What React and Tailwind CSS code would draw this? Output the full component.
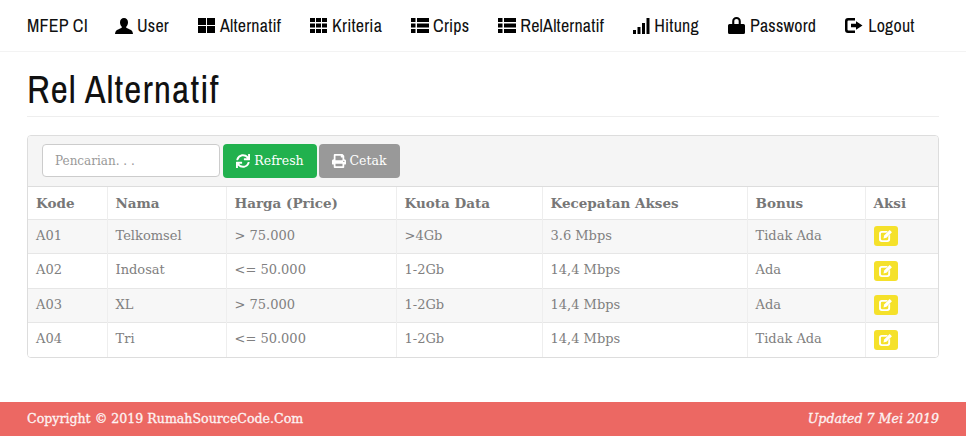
import React from "react";
import { FaSync, FaPrint } from "react-icons/fa";

const NARROW = "font-['Liberation_Sans_Narrow','Archivo_Narrow','Liberation_Sans',sans-serif]";

const User = () => (
  <svg viewBox="0 0 18 16" className="h-[16px] w-[18px] fill-black">
    <path d="M9 0c2.400 0 4 1.800 4 4.300 0 1.800-.7 3.200-1.600 4.200-.4.500-.3 1.100.3 1.500 1.600.8 3.600 1.400 4.900 2.600.7.7 1.200 1.900 1.400 3.400H0c.2-1.500.7-2.700 1.400-3.400C2.700 11.400 4.700 10.800 6.300 10c.6-.4.7-1 .3-1.500C5.700 7.500 5 6.100 5 4.300 5 1.800 6.600 0 9 0z" />
  </svg>
);

const Lock = () => (
  <svg viewBox="0 0 17 17" className="h-[17px] w-[17px] fill-black">
    <path d="M8.500 0C11 0 12.800 1.700 12.800 4.200V7H15.500a1.500 1.500 0 0 1 1.500 1.500V15.500a1.500 1.500 0 0 1-1.500 1.500H1.500A1.500 1.500 0 0 1 0 15.500V8.500A1.500 1.500 0 0 1 1.500 7H4.200V4.200C4.200 1.700 6 0 8.500 0zM6.300 7h4.400V4.200c0-1.300-.9-2.200-2.200-2.200s-2.200.9-2.200 2.200z" />
  </svg>
);

const ThLarge = () => (
  <svg viewBox="0 0 17 15" className="h-[15px] w-[17px] fill-black">
    <rect x="0" y="0" width="8" height="7" />
    <rect x="9" y="0" width="8" height="7" />
    <rect x="0" y="8" width="8" height="7" />
    <rect x="9" y="8" width="8" height="7" />
  </svg>
);

const Th = () => (
  <svg viewBox="0 0 17 15" className="h-[15px] w-[17px] fill-black">
    {[0, 6, 12].map((x) =>
      [0, 5.5, 11].map((y) => <rect key={`${x}-${y}`} x={x} y={y} width="5" height="4" />)
    )}
  </svg>
);

const ThList = () => (
  <svg viewBox="0 0 18 15" className="h-[15px] w-[18px] fill-black">
    {[0, 5.5, 11].map((y) => (
      <g key={y}>
        <rect x="0" y={y} width="4.500" height="4" />
        <rect x="6" y={y} width="12" height="4" />
      </g>
    ))}
  </svg>
);

const Signal = () => (
  <svg viewBox="0 0 17 16" className="h-[16px] w-[17px] fill-black">
    <rect x="0" y="12" width="3" height="4" />
    <rect x="4.500" y="9" width="3" height="7" />
    <rect x="9" y="5" width="3" height="11" />
    <rect x="13.500" y="0" width="3" height="16" />
  </svg>
);

const LogOut = () => (
  <svg viewBox="0 0 18 15" className="h-[15px] w-[18px] fill-black">
    <path d="M3 0h7v2.500H3.500a1 1 0 0 0-1 1v8a1 1 0 0 0 1 1H10V15H3a3 3 0 0 1-3-3V3a3 3 0 0 1 3-3z" />
    <path d="M11 3.200l6.500 4.300-6.500 4.300V9.300H6V5.700h5z" />
  </svg>
);

const Edit = () => (
  <svg viewBox="0 0 14 13" className="h-[12px] w-[13px] fill-white">
    <path d="M3 1h6.500L8 3H3.200A1.200 1.200 0 0 0 2 4.200v5.600A1.200 1.200 0 0 0 3.200 11h5.600A1.200 1.200 0 0 0 10 9.800V7l2-2v5a3 3 0 0 1-3 3H3a3 3 0 0 1-3-3V4a3 3 0 0 1 3-3z" />
    <path d="M11.500 0L14 2.500 8 8.500l-3.200.7.700-3.200z" />
  </svg>
);

const NAV = [
  { label: "User", icon: <User />, gap: "gap-[4px]" },
  { label: "Alternatif", icon: <ThLarge />, gap: "gap-[5px]" },
  { label: "Kriteria", icon: <Th />, gap: "gap-[5px]" },
  { label: "Crips", icon: <ThList />, gap: "gap-[4px]" },
  { label: "RelAlternatif", icon: <ThList />, gap: "gap-[4px]" },
  { label: "Hitung", icon: <Signal />, gap: "gap-[4px]" },
  { label: "Password", icon: <Lock />, gap: "gap-[5px]" },
  { label: "Logout", icon: <LogOut />, gap: "gap-[5px]" },
];

const ROWS = [
  ["A01", "Telkomsel", "> 75.000", ">4Gb", "3.6 Mbps", "Tidak Ada"],
  ["A02", "Indosat", "<= 50.000", "1-2Gb", "14,4 Mbps", "Ada"],
  ["A03", "XL", "> 75.000", "1-2Gb", "14,4 Mbps", "Ada"],
  ["A04", "Tri", "<= 50.000", "1-2Gb", "14,4 Mbps", "Tidak Ada"],
];

const HEADERS = ["Kode", "Nama", "Harga (Price)", "Kuota Data", "Kecepatan Akses", "Bonus", "Aksi"];
const WIDTHS = ["w-[79px]", "w-[119px]", "w-[170px]", "w-[146px]", "w-[205px]", "w-[118px]", "w-[73px]"];

export default function App() {
  return (
    <div className="flex min-h-[436px] flex-col bg-white font-['DejaVu_Serif',serif]">
      {/* Navbar */}
      <nav className={`flex h-[52px] items-center border-b border-[#f3f3f3] pl-[27px] text-[18px] tracking-[0.2px] whitespace-nowrap text-[#111] ${NARROW}`}>
        <span className="mr-[27px]">MFEP CI</span>
        <div className="flex items-center gap-[29px]">
          {NAV.map((item) => (
            <a key={item.label} className={`flex items-center ${item.gap}`}>
              {item.icon}
              {item.label}
            </a>
          ))}
        </div>
      </nav>

      <main className="px-[27px]">
        <h1 className={`mt-[18px] border-b border-[#eeeeee] pb-[7px] text-[38px] leading-[39px] tracking-[1px] text-[#111] ${NARROW}`}>
          Rel Alternatif
        </h1>

        {/* Panel */}
        <section className="mt-[18px] overflow-hidden rounded border border-[#dddddd]">
          <div className="flex h-[51px] items-center border-b border-[#dddddd] bg-[#f5f5f5] pb-[1px] pl-[14px]">
            <input
              placeholder="Pencarian. . ."
              className="h-[33px] w-[178px] rounded border border-[#cccccc] bg-white px-3 text-[12px] placeholder:text-[#999]"
            />
            <button className="ml-[3px] flex h-[34px] w-[94px] items-center justify-center gap-[4px] rounded bg-[#21b14e] pt-[1px] text-[12.5px] text-white">
              <FaSync className="text-[14px]" /> Refresh
            </button>
            <button className="ml-[2px] flex h-[34px] w-[81px] items-center justify-center gap-[3px] rounded bg-[#999999] pt-[1px] text-[12.5px] text-white">
              <FaPrint className="text-[14px]" /> Cetak
            </button>
          </div>

          <table className="w-full table-fixed border-collapse text-[13px] text-[#808080]">
            <thead>
              <tr className="h-[32px]">
                {HEADERS.map((h, i) => (
                  <th key={h} className={`border-l border-[#eeeeee] px-2 text-left text-[13.5px] font-bold text-[#777] first:border-l-0 ${WIDTHS[i]}`}>
                    {h}
                  </th>
                ))}
              </tr>
            </thead>
            <tbody>
              {ROWS.map((row, r) => (
                <tr key={row[0]} className={`h-[34.500px] border-t border-[#e6e6e6] ${r % 2 === 0 ? "bg-[#f7f7f7]" : "bg-white"}`}>
                  {row.map((cell, i) => (
                    <td key={i} className="border-l border-[#eeeeee] px-2 pb-[2px] first:border-l-0">
                      {cell}
                    </td>
                  ))}
                  <td className="border-l border-[#eeeeee] px-2">
                    <span className="flex h-[20px] w-[24px] items-center justify-center rounded-[3px] bg-[#f5e12a]">
                      <Edit />
                    </span>
                  </td>
                </tr>
              ))}
            </tbody>
          </table>
        </section>
      </main>

      {/* Footer */}
      <footer className="mt-auto flex h-[34px] items-center justify-between bg-[#ec6863] px-[27px] text-[12.6px] text-[#fdf3f3] [-webkit-text-stroke:0.3px_#fdf3f3]">
        <span>Copyright © 2019 RumahSourceCode.Com</span>
        <span className="italic">Updated 7 Mei 2019</span>
      </footer>
    </div>
  );
}
